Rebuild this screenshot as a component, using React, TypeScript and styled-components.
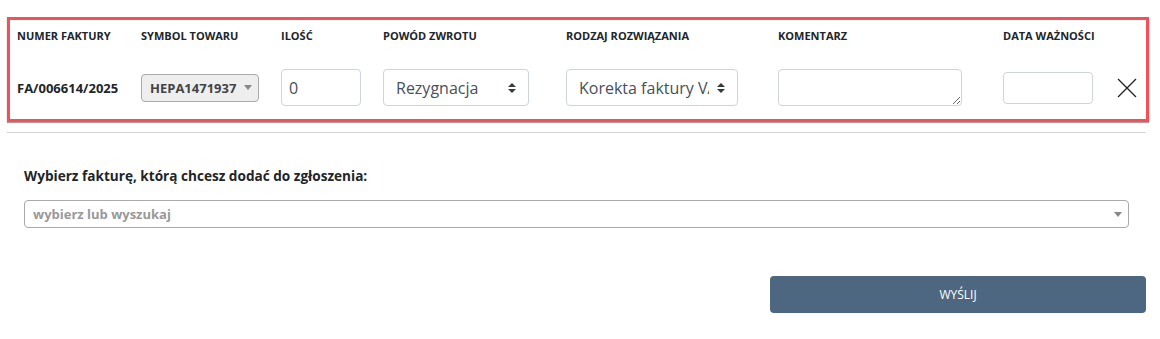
import React from "react";
import styled, { createGlobalStyle } from "styled-components";

const Global = createGlobalStyle`
  body {
    margin: 0;
    background: #fff;
    font-family: "Open Sans", "Liberation Sans", sans-serif;
    color: #212529;
  }
`;

const Page = styled.div`
  width: 1142px;
  padding: 17px 0 0 7px;
`;

const ReturnRow = styled.div`
  border: 3px solid #f64f58;
  box-shadow: 0 1px 1px rgba(0, 0, 0, 0.35);
  padding: 8px 0 13px 7px;
  display: grid;
  grid-template-columns: 124px 140px 102px 183px 212px 225px 114px auto;
  grid-template-rows: 16px 37px;
  row-gap: 25px;
  align-items: center;
`;

const Label = styled.div`
  font-size: 11px;
  line-height: 16px;
  font-weight: 700;
  text-transform: uppercase;
  color: #212529;
  white-space: nowrap;
`;

const InvoiceNo = styled.div`
  font-size: 13px;
  font-weight: 700;
  color: #212529;
`;

const Select2 = styled.div<{ $width: number }>`
  box-sizing: border-box;
  width: ${(p) => p.$width}px;
  height: 28px;
  display: flex;
  align-items: center;
  padding: 0 6px 0 8px;
  border: 1px solid #aaa;
  border-radius: 4px;
  background: ${(p) => (p.$width < 200 ? "#eee" : "#fff")};
`;

const Select2Text = styled.span<{ $placeholder?: boolean }>`
  flex: 1;
  font-size: 13px;
  font-weight: 700;
  color: ${(p) => (p.$placeholder ? "#999" : "#444")};
  white-space: nowrap;
  overflow: hidden;
`;

const Caret = styled.span`
  width: 0;
  height: 0;
  border-style: solid;
  border-width: 5px 4px 0 4px;
  border-color: #888 transparent transparent transparent;
`;

const TextInput = styled.input<{ $width: number; $height: number }>`
  box-sizing: border-box;
  width: ${(p) => p.$width}px;
  height: ${(p) => p.$height}px;
  padding: 0 7px;
  border: 1px solid #ced4da;
  border-radius: 4px;
  font-family: inherit;
  font-size: 16px;
  color: #495057;
  outline: none;
`;

const CustomSelect = styled.div<{ $width: number }>`
  box-sizing: border-box;
  width: ${(p) => p.$width}px;
  height: 37px;
  display: flex;
  align-items: center;
  padding: 0 12px;
  border: 1px solid #ced4da;
  border-radius: 4px;
  font-size: 16px;
  color: #495057;
`;

const SelectValue = styled.span`
  flex: 1;
  min-width: 0;
  margin-right: 8px;
  white-space: nowrap;
  overflow: hidden;
`;

const Comment = styled.textarea`
  box-sizing: border-box;
  width: 184px;
  height: 37px;
  border: 1px solid #ced4da;
  border-radius: 4px;
  font-family: inherit;
  font-size: 16px;
  padding: 6px 12px;
  display: block;
`;

const Remove = styled.button`
  width: 20px;
  height: 20px;
  padding: 0;
  border: none;
  background: none;
  display: flex;
  align-items: center;
  justify-content: center;
  cursor: pointer;
`;

const Divider = styled.div`
  height: 1px;
  background: #d4d4d4;
  margin-top: 10px;
  width: 1139px;
`;

const InvoiceSection = styled.div`
  padding: 33px 3px 0 17px;
  display: flex;
  flex-direction: column;
`;

const Heading = styled.div`
  font-size: 13.6px;
  font-weight: 700;
  line-height: 20px;
  color: #212529;
  margin-bottom: 14px;
`;

const Submit = styled.button`
  align-self: flex-end;
  width: 376px;
  height: 37px;
  margin-top: 48px;
  border: none;
  border-radius: 4px;
  background: #4e6780;
  color: #fff;
  font-family: inherit;
  font-size: 12px;
  text-transform: uppercase;
`;

const Arrows = () => (
  <svg width="8" height="10" viewBox="0 0 4 5">
    <path d="M2 0L0 2h4zm0 5L0 3h4z" fill="#343a40" />
  </svg>
);

export default function App() {
  return (
    <Page>
      <Global />
      <ReturnRow>
        <Label>Numer faktury</Label>
        <Label>Symbol towaru</Label>
        <Label>Ilość</Label>
        <Label>Powód zwrotu</Label>
        <Label>Rodzaj rozwiązania</Label>
        <Label>Komentarz</Label>
        <Label>Data ważności</Label>
        <div />

        <InvoiceNo>FA/006614/2025</InvoiceNo>
        <Select2 $width={118}>
          <Select2Text>HEPA1471937</Select2Text>
          <Caret />
        </Select2>
        <TextInput $width={80} $height={37} defaultValue="0" />
        <CustomSelect $width={146}>
          <SelectValue>Rezygnacja</SelectValue>
          <Arrows />
        </CustomSelect>
        <CustomSelect $width={172}>
          <SelectValue>Korekta faktury VAT</SelectValue>
          <Arrows />
        </CustomSelect>
        <Comment />
        <TextInput $width={90} $height={32} />
        <Remove aria-label="usuń">
          <svg width="20" height="20" viewBox="0 0 20 20">
            <path d="M1 1L19 19M19 1L1 19" stroke="#222" strokeWidth="1.3" />
          </svg>
        </Remove>
      </ReturnRow>
      <Divider />
      <InvoiceSection>
        <Heading>Wybierz fakturę, którą chcesz dodać do zgłoszenia:</Heading>
        <Select2 $width={1105}>
          <Select2Text $placeholder>wybierz lub wyszukaj</Select2Text>
          <Caret />
        </Select2>
        <Submit>Wyślij</Submit>
      </InvoiceSection>
    </Page>
  );
}
